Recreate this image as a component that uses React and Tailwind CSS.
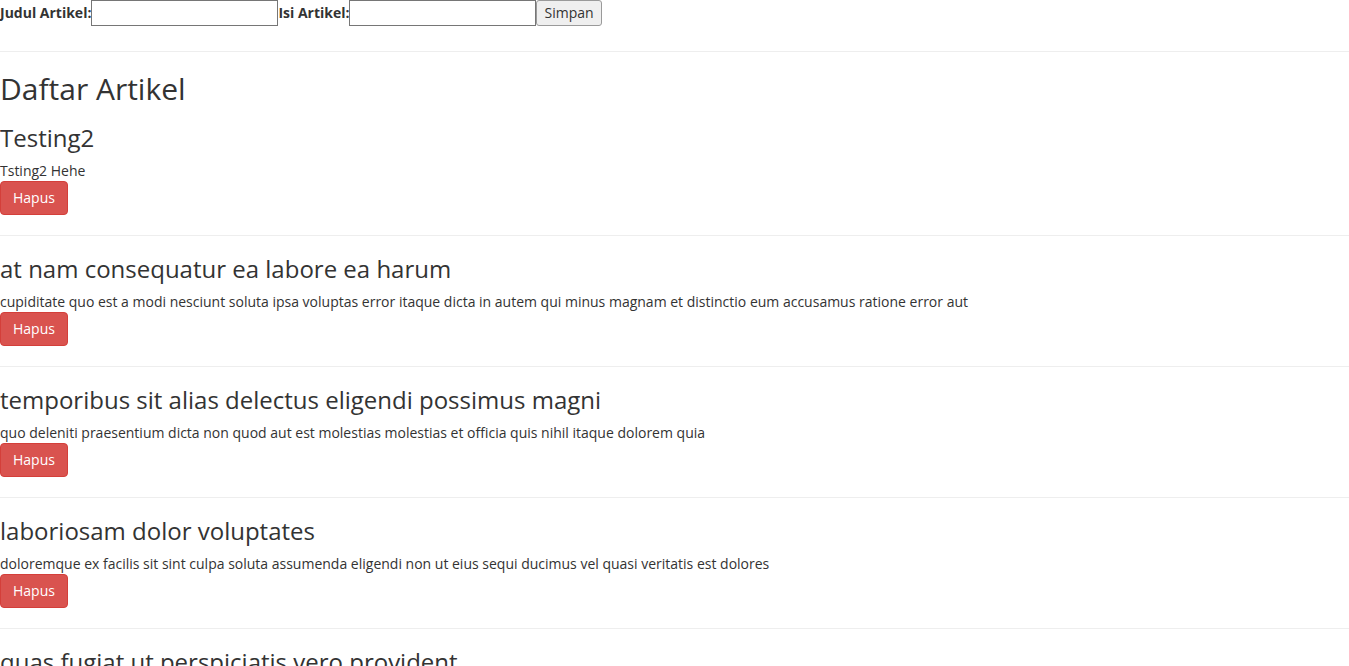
import React from "react";

const items = [
  ["Testing2", "Tsting2 Hehe"],
  [
    "at nam consequatur ea labore ea harum",
    "cupiditate quo est a modi nesciunt soluta ipsa voluptas error itaque dicta in autem qui minus magnam et distinctio eum accusamus ratione error aut",
  ],
  [
    "temporibus sit alias delectus eligendi possimus magni",
    "quo deleniti praesentium dicta non quod aut est molestias molestias et officia quis nihil itaque dolorem quia",
  ],
  [
    "laboriosam dolor voluptates",
    "doloremque ex facilis sit sint culpa soluta assumenda eligendi non ut eius sequi ducimus vel quasi veritatis est dolores",
  ],
  [
    "quas fugiat ut perspiciatis vero provident",
    "voluptatem rerum est et vel adipisci qui in quia enim quis",
  ],
];

export default function App() {
  return (
    <div
      className="bg-white text-[#333] text-[14px] leading-[20px]"
      style={{ fontFamily: '"Open Sans", "Helvetica Neue", Helvetica, Arial, sans-serif' }}
    >
      <div className="flex items-center pb-[5px]">
        <label className="font-bold">Judul Artikel:</label>
        <input
          type="text"
          className="w-[187px] h-[26px] border border-[#767676] bg-white px-[2px] outline-none"
        />
        <label className="font-bold">Isi Artikel:</label>
        <input
          type="text"
          className="w-[187px] h-[26px] border border-[#767676] bg-white px-[2px] outline-none"
        />
        <button className="h-[26px] px-[7px] bg-[#efefef] border border-[#9a9a9a] rounded-[3px] text-[#333]">
          Simpan
        </button>
      </div>
      <hr className="my-[20px] border-t border-[#eee]" />
      <h2 className="text-[30px] leading-[33px] mt-[20px] mb-[10px] font-normal">Daftar Artikel</h2>
      {items.map(([title, body], i) => (
        <div key={i}>
          <h3 className="text-[24px] leading-[26px] mt-[20px] mb-[10px] font-normal">{title}</h3>
          <div>{body}</div>
          <button className="block h-[34px] px-[12px] bg-[#d9534f] border border-[#d43f3a] rounded-[4px] text-white text-[14px] leading-[20px]">
            Hapus
          </button>
          <hr className="my-[20px] border-t border-[#eee]" />
        </div>
      ))}
    </div>
  );
}
